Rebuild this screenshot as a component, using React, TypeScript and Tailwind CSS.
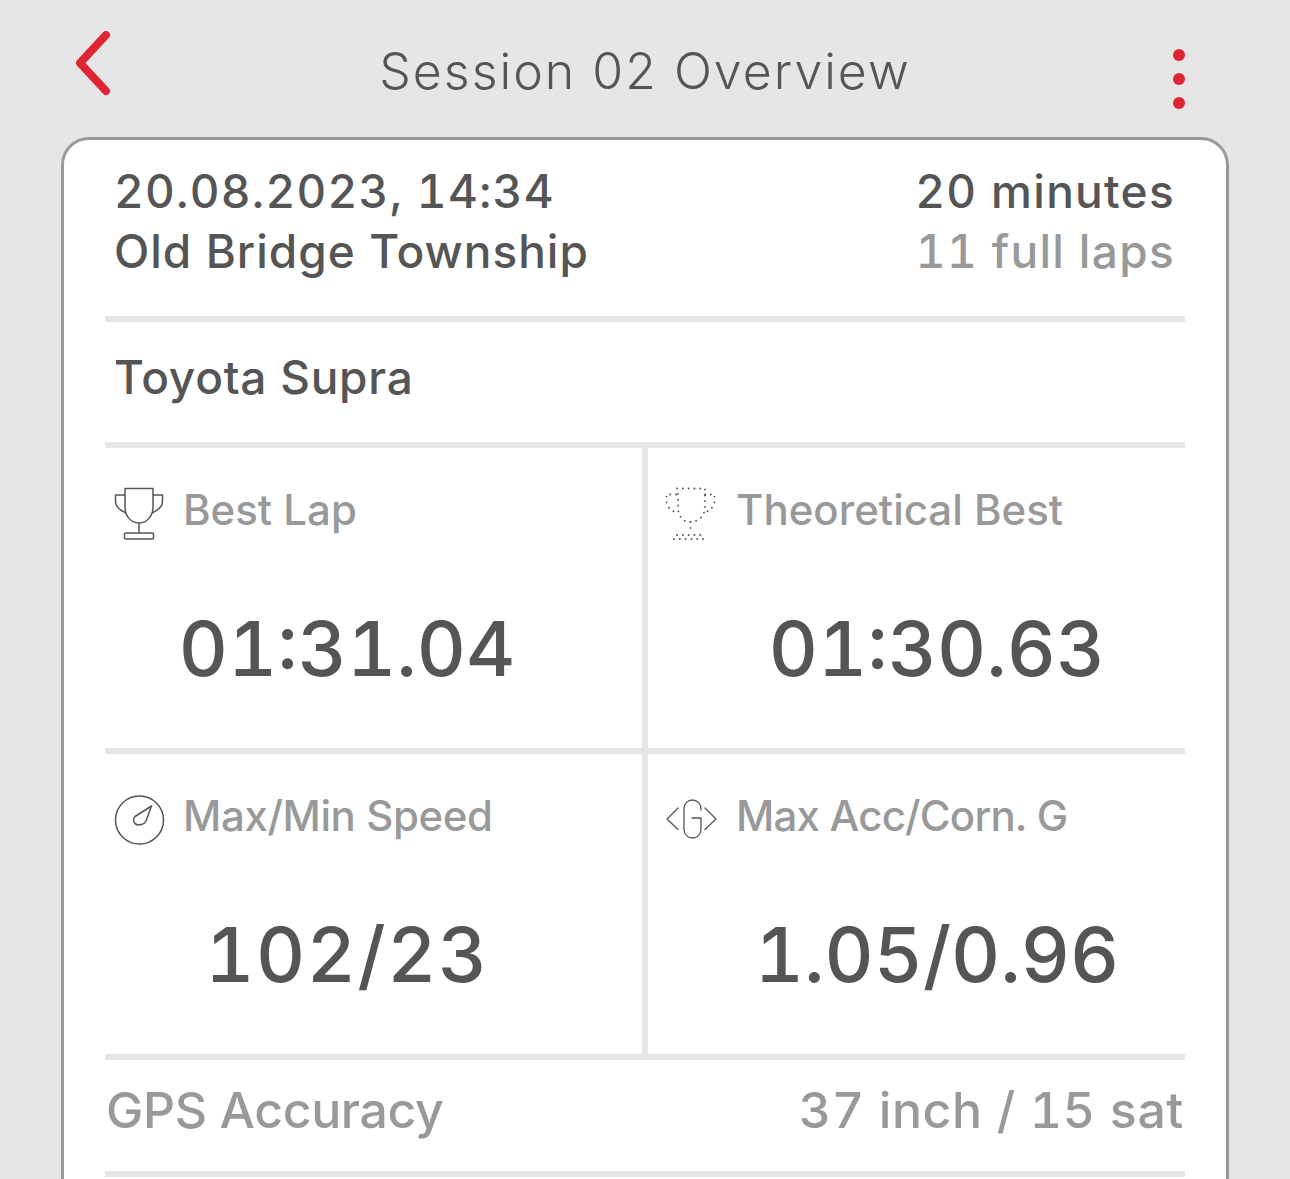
const FONT = "font-['Inter','Liberation_Sans',sans-serif]";

function Trophy() {
  return (
    <svg width="52" height="54" viewBox="0 0 52 54" fill="none" stroke="#555" strokeWidth="1.5" strokeLinejoin="round">
      <path d="M11 1.5H39V20C39 29 33 36 25 36C17 36 11 29 11 20Z" />
      <path d="M11 8H1.5V14C1.5 19 5 23 12 26" />
      <path d="M39 8H48.5V14C48.5 19 45 23 38 26" />
      <path d="M25 36V46" />
      <rect x="10.5" y="46" width="29" height="6" rx="1" />
    </svg>
  );
}

function DottedTrophy() {
  return (
    <svg width="52" height="54" viewBox="0 0 52 54" fill="none" stroke="#555" strokeWidth="1.8" strokeDasharray="0.1 5.7" strokeLinecap="round">
      <path d="M12 1.5H40V20C40 28 34 35 25.5 35C17 35 13 28 13 20V7" />
      <path d="M11 7.5H1.5V14C1.5 19 5 23 12 26" />
      <path d="M40 7.5H49.5V14C49.5 19 46 23 39 26" />
      <path d="M25.5 35V44" />
      <path d="M12 48H40" />
      <path d="M9 52H40" />
    </svg>
  );
}

function Gauge() {
  return (
    <svg width="52" height="54" viewBox="0 0 52 54" fill="none" stroke="#555" strokeWidth="1.5" strokeLinejoin="round">
      <circle cx="25.5" cy="27" r="24" />
      <path d="M37.5 13L32 28C30.5 31.5 25 33 21.5 31C19 29 19 25.5 21 23.5Z" />
    </svg>
  );
}

function GForce() {
  return (
    <svg width="52" height="54" viewBox="0 0 52 54" fill="none" stroke="#555" strokeWidth="1.3" strokeLinejoin="round" strokeLinecap="round">
      <path d="M13 15L2 26L13 36.5" />
      <path d="M40 15L51 26L40 36.5" />
      <path d="M36 17V15.5C36 10.5 32 7 27.5 7C23 7 19 10.5 19 15.5V36.5C19 41.5 23 45 27.5 45C32 45 36 41.5 36 36.5V25H27" />
    </svg>
  );
}

function Divider() {
  return <div className="h-[6px] bg-[#e6e6e6]" />;
}

function Stat({
  icon,
  label,
  value,
  valueClass,
  headClass,
  labelClass,
}: {
  icon: React.ReactNode;
  label: string;
  value: string;
  valueClass: string;
  headClass: string;
  labelClass: string;
}) {
  return (
    <div className="flex-1 h-full flex flex-col">
      <div className={`flex items-start h-[155px] ${headClass}`}>
        <div className="w-[52px] shrink-0 pt-[39px]">{icon}</div>
        <div className={`pt-[34px] text-[42px] leading-[56px] text-[#999999] font-medium whitespace-nowrap ${labelClass}`}>{label}</div>
      </div>
      <div className={`text-[76px] leading-[90px] text-[#555555] font-medium text-center tabular-nums ${valueClass}`}>{value}</div>
    </div>
  );
}

export default function App() {
  return (
    <div className={`h-[1179px] overflow-hidden bg-[#e6e6e6] ${FONT}`}>
      <div className="h-[137px] flex items-start justify-between pl-[75px] pr-[105px] relative">
        <svg width="36" height="66" viewBox="0 0 36 66" fill="none" stroke="#dd2534" strokeWidth="8" strokeLinecap="round" strokeLinejoin="round" className="mt-[31px]">
          <path d="M31 4L5 32L31 60" />
        </svg>
        <div className="absolute left-0 right-0 top-[40px] text-center text-[50px] leading-[62px] text-[#555555] font-[350] tracking-[2px]">Session 02 Overview</div>
        <div className="flex flex-col gap-[12px] mt-[49px]">
          <div className="w-[12px] h-[12px] rounded-full bg-[#dd2534]" />
          <div className="w-[12px] h-[12px] rounded-full bg-[#dd2534]" />
          <div className="w-[12px] h-[12px] rounded-full bg-[#dd2534]" />
        </div>
      </div>
      <div className="mx-[61px] h-[1100px] bg-white border-[3px] border-[#999999] rounded-[28px] px-[41px]">
        <div className="h-[176px] flex justify-between pl-[9px] pr-[10px] pt-[21px] text-[46px] leading-[60px] font-medium text-[#555555] tabular-nums tracking-[1px]">
          <div>
            <div className="whitespace-nowrap tracking-[1.25px]">20.08.2023, 14:34</div>
            <div className="whitespace-nowrap">Old Bridge Township</div>
          </div>
          <div className="text-right tracking-[1.3px]">
            <div className="whitespace-nowrap">20 minutes</div>
            <div className="whitespace-nowrap text-[#999999]">11 full laps</div>
          </div>
        </div>
        <Divider />
        <div className="h-[120px] flex items-center pl-[9px] pb-[10px] text-[46px] font-medium text-[#555555] tracking-[0.75px]">Toyota Supra</div>
        <Divider />
        <div className="h-[300px] flex">
          <Stat icon={<Trophy />} label="Best Lap" value="01:31.04" headClass="pl-[9px] gap-[17px]" labelClass="tracking-[0px]" valueClass="pr-[53px] tracking-[0px]" />
          <div className="w-[6px] bg-[#e6e6e6]" />
          <Stat icon={<DottedTrophy />} label="Theoretical Best" value="01:30.63" headClass="pl-[17px] gap-[19px]" labelClass="tracking-[0px]" valueClass="pl-[41px] tracking-[0px]" />
        </div>
        <Divider />
        <div className="h-[300px] flex">
          <Stat icon={<Gauge />} label="Max/Min Speed" value="102/23" headClass="pl-[9px] gap-[17px]" labelClass="tracking-[-0.4px]" valueClass="pr-[53px] tracking-[1.5px]" />
          <div className="w-[6px] bg-[#e6e6e6]" />
          <Stat icon={<GForce />} label="Max Acc/Corn. G" value="1.05/0.96" headClass="pl-[17px] gap-[19px]" labelClass="tracking-[-0.8px]" valueClass="pl-[41px] tracking-[0px]" />
        </div>
        <Divider />
        <div className="h-[111px] flex items-center justify-between pl-[1px] pr-[1px] pb-[10px] text-[50px] text-[#999999] font-medium tabular-nums">
          <span className="tracking-[-0.4px]">GPS Accuracy</span>
          <span className="tracking-[0.6px]">37 inch / 15 sat</span>
        </div>
        <Divider />
      </div>
    </div>
  );
}
